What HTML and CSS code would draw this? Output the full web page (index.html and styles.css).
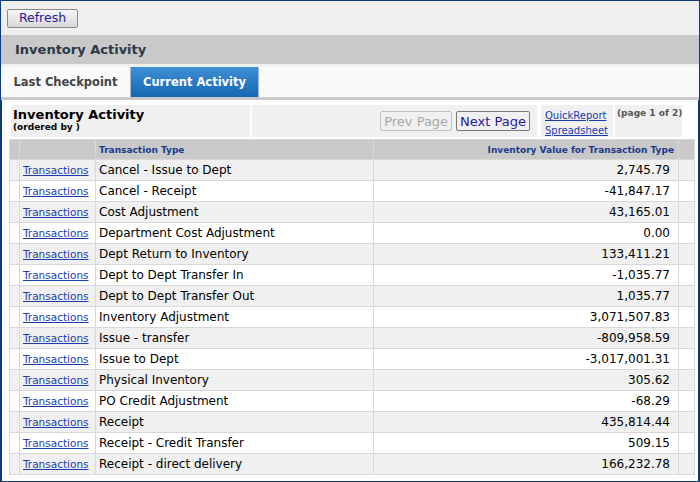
FILE: index.html
```html
<!DOCTYPE html>
<html lang="en">
<head>
    <meta charset="UTF-8">
    <title>Inventory Activity</title>
    <link rel="stylesheet" href="styles.css">
</head>
<body>
    <div id="page">
        <div id="toolbar">
            <button class="btn">Refresh</button>
        </div>
        <div id="band">Inventory Activity</div>
        <div id="tabs">
            <span class="tab">Last Checkpoint</span>
            <span class="tab active">Current Activity</span>
        </div>
        <div id="panel">
            <div id="report-head">
                <div class="head-cell title-cell">
                    <div class="report-title">Inventory Activity</div>
                    <div class="report-sub">(ordered by )</div>
                </div>
                <div class="head-cell paging-cell">
                    <button class="btn btn-page" disabled>Prev Page</button>
                    <button class="btn btn-page">Next Page</button>
                </div>
                <div class="head-cell links-cell">
                    <a href="#">QuickReport</a>
                    <a href="#">Spreadsheet</a>
                </div>
                <div class="head-cell page-cell">(page 1 of 2)</div>
            </div>
            <table id="grid">
                <tr class="grid-head">
                    <th class="edge"></th>
                    <th class="link-col"></th>
                    <th class="type-col">Transaction Type</th>
                    <th class="value-col">Inventory Value for Transaction Type</th>
                    <th class="edge-r"></th>
                </tr>
                <tr><td></td><td><a href="#">Transactions</a></td><td>Cancel - Issue to Dept</td><td class="num">2,745.79</td><td></td></tr>
                <tr><td></td><td><a href="#">Transactions</a></td><td>Cancel - Receipt</td><td class="num">-41,847.17</td><td></td></tr>
                <tr><td></td><td><a href="#">Transactions</a></td><td>Cost Adjustment</td><td class="num">43,165.01</td><td></td></tr>
                <tr><td></td><td><a href="#">Transactions</a></td><td>Department Cost Adjustment</td><td class="num">0.00</td><td></td></tr>
                <tr><td></td><td><a href="#">Transactions</a></td><td>Dept Return to Inventory</td><td class="num">133,411.21</td><td></td></tr>
                <tr><td></td><td><a href="#">Transactions</a></td><td>Dept to Dept Transfer In</td><td class="num">-1,035.77</td><td></td></tr>
                <tr><td></td><td><a href="#">Transactions</a></td><td>Dept to Dept Transfer Out</td><td class="num">1,035.77</td><td></td></tr>
                <tr><td></td><td><a href="#">Transactions</a></td><td>Inventory Adjustment</td><td class="num">3,071,507.83</td><td></td></tr>
                <tr><td></td><td><a href="#">Transactions</a></td><td>Issue - transfer</td><td class="num">-809,958.59</td><td></td></tr>
                <tr><td></td><td><a href="#">Transactions</a></td><td>Issue to Dept</td><td class="num">-3,017,001.31</td><td></td></tr>
                <tr><td></td><td><a href="#">Transactions</a></td><td>Physical Inventory</td><td class="num">305.62</td><td></td></tr>
                <tr><td></td><td><a href="#">Transactions</a></td><td>PO Credit Adjustment</td><td class="num">-68.29</td><td></td></tr>
                <tr><td></td><td><a href="#">Transactions</a></td><td>Receipt</td><td class="num">435,814.44</td><td></td></tr>
                <tr><td></td><td><a href="#">Transactions</a></td><td>Receipt - Credit Transfer</td><td class="num">509.15</td><td></td></tr>
                <tr><td></td><td><a href="#">Transactions</a></td><td>Receipt - direct delivery</td><td class="num">166,232.78</td><td></td></tr>
            </table>
        </div>
    </div>
</body>
</html>
```

FILE: styles.css
```css
body {
    margin: 0;
    padding: 0;
    font-family: "DejaVu Sans", Verdana, sans-serif;
    background-color: #f0f0f0;
}

#page {
    width: 700px;
    height: 482px;
    box-sizing: border-box;
    border: 1px solid #0e3c78;
    display: flex;
    flex-direction: column;
    overflow: hidden;
}

/* top bar with refresh */
#toolbar {
    height: 34px;
    box-sizing: border-box;
    padding: 6px 6px;
    background-color: #f0f0f0;
}

.btn {
    font-family: "DejaVu Sans", Verdana, sans-serif;
    font-size: 12.5px;
    color: #2a1a9a;
    background: linear-gradient(#f6f6f6, #d8d8d8);
    border: 1px solid #8a8a8a;
    border-radius: 2px;
    padding: 0 0 1px 0;
    height: 19px;
    width: 71px;
    cursor: pointer;
}

#band {
    height: 29px;
    line-height: 29px;
    background-color: #c8c9c8;
    padding-left: 14px;
    font-weight: bold;
    font-size: 13px;
    color: #2c3848;
}

#tabs {
    margin-top: 3px;
    height: 30px;
    background-color: #f9f9f9;
    border-bottom: 3px solid #c8c9c8;
    display: flex;
}

.tab {
    width: 129px;
    line-height: 30px;
    text-align: center;
    font-weight: bold;
    font-size: 11.5px;
    color: #444;
}

.tab.active {
    width: 127px;
    color: white;
    background: linear-gradient(#3f8fd4, #1567b3);
    border-left: 1px solid #9fb8d0;
    border-right: 1px solid #9fb8d0;
}

#panel {
    flex: 1;
    background-color: white;
    border-left: 1px solid #0e3c78;
    border-right: 1px solid #0e3c78;
    padding: 5px 2px 0 7px;
}

#report-head {
    display: flex;
    height: 32px;
    margin-bottom: 2px;
    margin-left: 2px;
}

.head-cell {
    background-color: #f0f0f0;
    box-sizing: border-box;
    margin-right: 2px;
}

.title-cell {
    width: 239px;
    padding: 2px 0 0 2px;
}

.report-title {
    font-weight: bold;
    font-size: 13px;
    color: #000;
}

.report-sub {
    font-weight: bold;
    font-size: 9px;
    color: #000;
}

.paging-cell {
    width: 285px;
    display: flex;
    justify-content: flex-end;
    align-items: center;
    padding-right: 7px;
    margin-right: 4px;
}

.btn-page {
    width: auto;
    padding: 0 3px;
    margin-left: 4px;
    font-size: 13px;
    background: #f0f0f0;
    border: 1px solid #7a7a7a;
    height: 20px;
}

.btn-page[disabled] {
    color: #a8a8a8;
    border-color: #c0c0c0;
    cursor: default;
}

.links-cell {
    width: 72px;
    padding: 3px 0 0 4px;
    display: flex;
    flex-direction: column;
    font-size: 10px;
    line-height: 15px;
}

.links-cell a, #grid a {
    color: #1a3cb0;
}

.page-cell {
    width: 67px;
    padding: 3px 0 0 2px;
    font-weight: bold;
    font-size: 9px;
    white-space: nowrap;
    color: #555;
}

#grid {
    border-collapse: collapse;
    width: 686px;
    font-size: 12px;
}

#grid th, #grid td {
    border: 1px solid #d8d8d8;
    padding: 0 3px;
    height: 20px;
    white-space: nowrap;
}

#grid th {
    background-color: #c8c9c8;
    color: #1a3a8c;
    font-size: 9px;
    text-align: left;
    height: 19px;
}

#grid th.value-col {
    text-align: right;
    padding-right: 4px;
}

#grid td.num {
    text-align: right;
    padding-right: 8px;
}

#grid tr:nth-child(even) {
    background-color: #f0f0f0;
}

#grid .edge {
    width: 3px;
}

#grid .link-col {
    width: 68px;
    padding-left: 4px;
}

#grid .type-col {
    width: 271px;
}

#grid .edge-r {
    width: 9px;
}

#grid td a {
    font-size: 10.5px;
}
```
